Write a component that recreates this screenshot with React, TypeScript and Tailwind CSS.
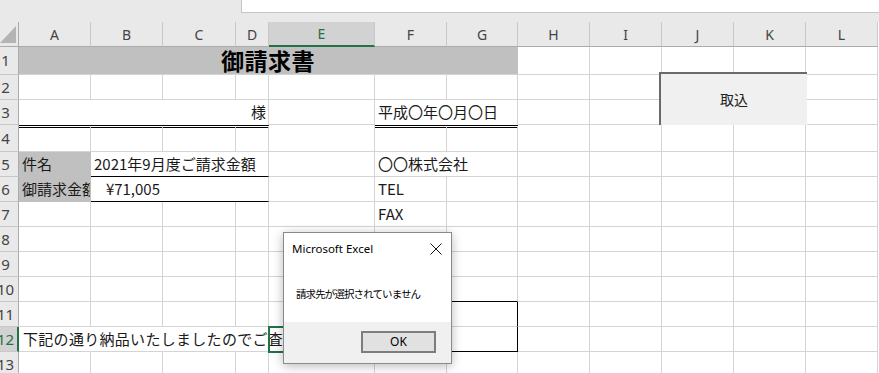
import React from "react";

const GR = "border-r border-b border-r-[#d4d4d4] border-b-[#d4d4d4]";
const CELLTXT = "flex items-center whitespace-nowrap text-[15px] text-[#1a1a1a]";

function Plain({ n }: { n: number }) {
  return (
    <>
      {Array.from({ length: n }).map((_, i) => (
        <div key={i} className={GR} />
      ))}
    </>
  );
}

function RH({ n, sel }: { n: number; sel?: boolean }) {
  return (
    <div
      className={
        sel
          ? "flex items-center overflow-hidden bg-[#d2d2d2] border-b border-b-[#c8c8c8] border-r-2 border-r-[#217346] text-[#217346]"
          : "flex items-center overflow-hidden bg-[#e9e9e9] border-b border-r border-b-[#c8c8c8] border-r-[#ababab] text-[#444]"
      }
    >
      <div className="-ml-[8px] w-[27px] shrink-0 text-center text-[15px] leading-none font-['Noto_Sans',sans-serif]">
        {n}
      </div>
    </div>
  );
}

const COLS = ["A", "B", "C", "D", "E", "F", "G", "H", "I", "J", "K", "L"];

export default function App() {
  return (
    <div className="relative w-[879px] h-[373px] overflow-hidden bg-white font-['Noto_Sans_CJK_JP',sans-serif]">
      {/* top strip with formula bar */}
      <div className="flex h-[22px] bg-[#e9e9e9]">
        <div className="w-[241px] shrink-0" />
        <div className="flex-1 h-[13px] bg-white border-l border-b border-[#c6c6c6]" />
      </div>

      <div className="grid grid-cols-[19px_72px_72px_73px_33px_106px_72px_71px_72px_72px_72px_72px_72px] grid-rows-[25px_28px_25px_25px_27px_25px_25px_25px_25px_25px_25px_25px_25px_25px]">
        {/* header row */}
        <div className="relative bg-[#e9e9e9] border-r border-b border-r-[#ababab] border-b-[#ababab]">
          <svg className="absolute left-0 top-[2px]" width="18" height="20" viewBox="0 0 18 20">
            <polygon points="0,19 16,19 16,2" fill="#b4b4b4" />
          </svg>
        </div>
        {COLS.map((c) =>
          c === "E" ? (
            <div
              key={c}
              className="flex items-center justify-center bg-[#d2d2d2] border-r border-r-[#c8c8c8] border-b-2 border-b-[#217346] text-[#217346] text-[14px] font-['Noto_Sans',sans-serif]"
            >
              {c}
            </div>
          ) : (
            <div
              key={c}
              className="flex items-center justify-center bg-[#e9e9e9] border-r border-b border-r-[#c8c8c8] border-b-[#ababab] text-[#444] text-[14px] font-['Noto_Sans',sans-serif]"
            >
              {c}
            </div>
          )
        )}

        {/* row 1 */}
        <RH n={1} />
        <div className="col-span-7 flex items-center justify-center bg-[#c0c0c0] border-r border-b border-r-[#c0c0c0] border-b-[#d4d4d4] text-[23px] font-bold text-black tracking-[0.5px]">
          御請求書
        </div>
        <Plain n={5} />

        {/* row 2 */}
        <RH n={2} />
        <Plain n={12} />

        {/* row 3 */}
        <RH n={3} />
        <div className={"col-span-4 justify-end pr-[2px] border-r border-b border-r-[#d4d4d4] border-b-transparent " + CELLTXT}>
          様
        </div>
        <div className={GR} />
        <div className={"col-span-2 pl-[3px] border-r border-b border-r-[#d4d4d4] border-b-transparent " + CELLTXT}>
          平成〇年〇月〇日
        </div>
        <Plain n={5} />

        {/* row 4 */}
        <RH n={4} />
        <div className="border-r border-b border-t-[3px] border-double border-r-[#d4d4d4] border-b-[#d4d4d4] border-t-black" />
        <div className="border-r border-b border-t-[3px] border-double border-r-[#d4d4d4] border-b-[#d4d4d4] border-t-black" />
        <div className="border-r border-b border-t-[3px] border-double border-r-[#d4d4d4] border-b-[#d4d4d4] border-t-black" />
        <div className="border-r border-b border-t-[3px] border-double border-r-[#d4d4d4] border-b-[#d4d4d4] border-t-black" />
        <div className={GR} />
        <div className="border-r border-b border-t-[3px] border-double border-r-[#d4d4d4] border-b-[#d4d4d4] border-t-black" />
        <div className="border-r border-b border-t-[3px] border-double border-r-[#d4d4d4] border-b-[#d4d4d4] border-t-black" />
        <Plain n={5} />

        {/* row 5 */}
        <RH n={5} />
        <div className={"pl-[3px] bg-[#c0c0c0] border-r border-b border-r-[#c0c0c0] border-b-[#c0c0c0] overflow-hidden " + CELLTXT}>
          件名
        </div>
        <div className={"col-span-3 pl-[3px] border-r border-b border-r-[#d4d4d4] border-b-black " + CELLTXT}>
          2021年9月度ご請求金額
        </div>
        <div className={GR} />
        <div className={"col-span-2 pl-[3px] " + GR + " " + CELLTXT}>〇〇株式会社</div>
        <Plain n={5} />

        {/* row 6 */}
        <RH n={6} />
        <div className={"pl-[3px] bg-[#c0c0c0] border-r border-b border-r-[#c0c0c0] border-b-[#c0c0c0] overflow-hidden " + CELLTXT}>
          御請求金額
        </div>
        <div className={"col-span-3 border-r border-b border-r-[#d4d4d4] border-b-black " + CELLTXT}>
          <div className="w-[72px] text-right pr-[3px]">¥71,005</div>
        </div>
        <div className={GR} />
        <div className={"pl-[3px] " + GR + " " + CELLTXT}>TEL</div>
        <Plain n={6} />

        {/* row 7 */}
        <RH n={7} />
        <Plain n={5} />
        <div className={"pl-[3px] " + GR + " " + CELLTXT}>FAX</div>
        <Plain n={6} />

        {/* row 8 */}
        <RH n={8} />
        <Plain n={12} />

        {/* row 9 */}
        <RH n={9} />
        <Plain n={12} />

        {/* row 10 */}
        <RH n={10} />
        <Plain n={5} />
        <div className="border-r border-b border-r-[#d4d4d4] border-b-black" />
        <div className="border-r border-b border-r-[#d4d4d4] border-b-black" />
        <Plain n={5} />

        {/* row 11 */}
        <RH n={11} />
        <Plain n={5} />
        <div className={GR} />
        <div className="border-r border-b border-r-black border-b-[#d4d4d4]" />
        <Plain n={5} />

        {/* row 12 */}
        <RH n={12} sel />
        <div className={"col-span-4 pl-[4px] border-r border-b border-r-[#d4d4d4] border-b-[#d4d4d4] " + CELLTXT}>
          <span className="tracking-[0.3px]">下記の通り納品いたしましたのでご査収ください。</span>
        </div>
        <div className={GR} />
        <div className="border-r border-b border-r-[#d4d4d4] border-b-black" />
        <div className="border-r border-b border-r-black border-b-black" />
        <Plain n={5} />

        {/* row 13 */}
        <RH n={13} />
        <Plain n={12} />
      </div>

      {/* active cell E12 */}
      <div className="absolute left-[268px] top-[326px] w-[108px] h-[27px] border-2 border-[#217346]" />

      {/* 取込 button */}
      <div className="absolute left-[659px] top-[72px] w-[148px] h-[53px] flex items-center justify-center bg-[#f0f0f0] border-t-2 border-l-2 border-t-[#6a6a6a] border-l-[#6a6a6a] text-[14px] text-[#222]">
        取込
      </div>

      {/* dialog */}
      <div className="absolute left-[283px] top-[232px] w-[169px] h-[132px] flex flex-col bg-white border border-[#8a8a8a] shadow-[0_2px_10px_rgba(0,0,0,0.28)]">
        <div className="h-[32px] flex items-center justify-between pl-[8px] pr-[9px]">
          <span className="text-[11.5px] text-black font-['Noto_Sans',sans-serif]">Microsoft Excel</span>
          <svg width="12" height="12" viewBox="0 0 12 12">
            <path d="M0.5 0.5 L11.5 11.5 M11.5 0.5 L0.5 11.5" stroke="#111" strokeWidth="1" />
          </svg>
        </div>
        <div className="h-[57px] flex items-center pl-[12px]">
          <span className="text-[10.5px] tracking-[-0.9px] text-black whitespace-nowrap">請求先が選択されていません</span>
        </div>
        <div className="flex-1 bg-[#f0f0f0] flex justify-end items-start pt-[9px] pr-[15px]">
          <div className="w-[75px] h-[22px] flex items-center justify-center bg-[#e1e1e1] border-2 border-[#7d7d7d] text-[12px] text-black font-['Noto_Sans',sans-serif]">
            OK
          </div>
        </div>
      </div>
    </div>
  );
}
